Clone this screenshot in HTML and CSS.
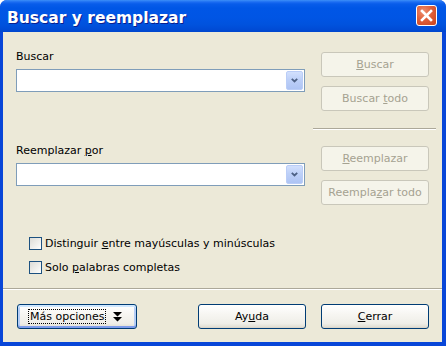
FILE: index.html
```html
<!DOCTYPE html>
<html lang="es">
<head>
<meta charset="utf-8">
<title>Buscar y reemplazar</title>
<link rel="stylesheet" href="styles.css">
</head>
<body>
<div class="window">
  <div class="titlebar">
    <span class="title">Buscar y reemplazar</span>
    <span class="close">
      <svg width="13" height="13" viewBox="0 0 13 13"><path d="M2 2L11 11M11 2L2 11" stroke="#fff" stroke-width="2.6" stroke-linecap="square" fill="none"/></svg>
    </span>
  </div>
  <div class="client">
    <div class="group">
      <div class="field">
        <span class="label">Buscar</span>
        <div class="combo"><span class="combo-btn"><svg width="7" height="5" viewBox="0 0 7 5"><path d="M0.8 0.8L3.5 3.5L6.2 0.8" stroke="#4D6185" stroke-width="1.8" fill="none"/></svg></span></div>
      </div>
      <div class="actions">
        <span class="btn disabled"><span><u>B</u>uscar</span></span>
        <span class="btn disabled"><span>Buscar <u>t</u>odo</span></span>
      </div>
    </div>
    <div class="sep short"></div>
    <div class="group second">
      <div class="field">
        <span class="label">Reemplazar <u>p</u>or</span>
        <div class="combo"><span class="combo-btn"><svg width="7" height="5" viewBox="0 0 7 5"><path d="M0.8 0.8L3.5 3.5L6.2 0.8" stroke="#4D6185" stroke-width="1.8" fill="none"/></svg></span></div>
      </div>
      <div class="actions">
        <span class="btn disabled"><span><u>R</u>eemplazar</span></span>
        <span class="btn disabled"><span>Reempla<u>z</u>ar todo</span></span>
      </div>
    </div>
    <div class="checks">
      <div class="check"><span class="box"></span><span>Distinguir <u>e</u>ntre mayúsculas y minúsculas</span></div>
      <div class="check"><span class="box"></span><span>Solo <u>p</u>alabras completas</span></div>
    </div>
    <div class="sep full"></div>
    <div class="footer">
      <span class="btn more focused"><span class="focus-rect">Más opciones</span><svg class="more-icon" width="9" height="10" viewBox="0 0 9 10"><path d="M0 0H9L4.5 4.5Z M0 5H9L4.5 9.5Z" fill="#000"/></svg></span>
      <span class="btn push"><span>Ay<u>u</u>da</span></span>
      <span class="btn"><span><u>C</u>errar</span></span>
    </div>
  </div>
</div>
</body>
</html>
```
FILE: styles.css
```css
html, body {
  margin: 0;
  padding: 0;
  background: #ffffff;
}
body {
  font-family: "DejaVu Sans", "Liberation Sans", sans-serif;
  font-size: 11px;
  color: #000;
}
.window {
  width: 446px;
  height: 346px;
  box-sizing: border-box;
  display: flex;
  flex-direction: column;
  background: #0846D8;
  border-radius: 7px 7px 0 0;
  overflow: hidden;
}
.titlebar {
  flex: none;
  height: 32px;
  display: flex;
  align-items: flex-start;
  padding-left: 7px;
  background: linear-gradient(#3D8FF8 0px, #1C6DF2 2px, #085CEA 4px, #0056E6 8px, #0055E4 18px, #0052DD 25px, #004CD6 29px, #0046CE 32px);
}
.title {
  margin-top: 9px;
  line-height: 18px;
  font-size: 15.5px;
  font-weight: bold;
  color: #fff;
  text-shadow: 1px 1px 0 #0A1E8E;
  white-space: nowrap;
}
.close {
  margin-left: auto;
  margin-right: 9px;
  margin-top: 5px;
  width: 21px;
  height: 21px;
  box-sizing: border-box;
  border: 1px solid #fff;
  border-radius: 3px;
  background: radial-gradient(circle at 35% 30%, #EE9070 0%, #E0603A 45%, #C9421D 100%);
  display: flex;
  align-items: center;
  justify-content: center;
}
.client {
  flex: 1;
  margin: 0 4px 4px 3px;
  background: #ECE9D8;
  padding: 18px 13px 13px;
  display: flex;
  flex-direction: column;
}
.group {
  display: flex;
  justify-content: space-between;
}
.group.second {
  margin-top: 14px;
}
.field {
  width: 289px;
}
.label {
  display: block;
  height: 13px;
  line-height: 13px;
  margin-bottom: 6px;
  white-space: nowrap;
}
.combo {
  box-sizing: border-box;
  width: 289px;
  height: 23px;
  border: 1px solid #7F9DB9;
  background: #fff;
  padding: 1px;
  display: flex;
  justify-content: flex-end;
}
.combo-btn {
  box-sizing: border-box;
  width: 17px;
  height: 19px;
  border: 1px solid #BACDF7;
  border-radius: 2px;
  background: linear-gradient(#D2E0FD, #BDD0F8 45%, #AEC4F4 100%);
  display: flex;
  align-items: center;
  justify-content: center;
}
.actions {
  display: flex;
  flex-direction: column;
  gap: 9px;
  padding-top: 2px;
}
.btn {
  box-sizing: border-box;
  width: 108px;
  height: 25px;
  border: 1px solid #003C74;
  border-radius: 3px;
  background: linear-gradient(#FFFFFF 0%, #F7F6F2 40%, #EFEEE8 80%, #E3E0D6 94%, #D6D0C5 100%);
  display: flex;
  align-items: center;
  justify-content: center;
  line-height: 13px;
  white-space: nowrap;
}
.btn.disabled {
  border-color: #C9C7BA;
  background: #F5F4EA;
  color: #A5A291;
}
.sep {
  height: 2px;
  box-sizing: border-box;
  border-top: 1px solid #ACA899;
  border-bottom: 1px solid #FFFFFF;
}
.sep.short {
  width: 123px;
  margin-top: 17px;
  margin-left: auto;
  margin-right: -7px;
}
.sep.full {
  margin: 14px -13px 0;
}
.checks {
  margin-top: 32px;
  padding-left: 13px;
  display: flex;
  flex-direction: column;
  gap: 11px;
}
.check {
  display: flex;
  align-items: center;
  gap: 3px;
  height: 13px;
  line-height: 13px;
  white-space: nowrap;
}
.box {
  flex: none;
  width: 13px;
  height: 13px;
  box-sizing: border-box;
  border: 1px solid #1C5180;
  background: linear-gradient(135deg, #DCDCD7 0%, #F4F4F1 70%, #FFFFFF 100%);
}
.footer {
  margin-top: 14px;
  display: flex;
  align-items: center;
}
.btn.more {
  width: 120px;
  margin-left: 1px;
  justify-content: flex-start;
  padding-left: 10px;
  gap: 7px;
  box-shadow: inset 0 2px 0 #CEE7FF, inset 0 -2px 0 #7D9CEB, inset 2px 0 0 #B6CEF6, inset -2px 0 0 #B6CEF6;
}
.focus-rect {
  border: 1px dotted #000;
  padding: 0 1px;
  line-height: 13px;
}
.more-icon {
  flex: none;
}
.btn.push {
  margin-left: auto;
  margin-right: 15px;
}
```
